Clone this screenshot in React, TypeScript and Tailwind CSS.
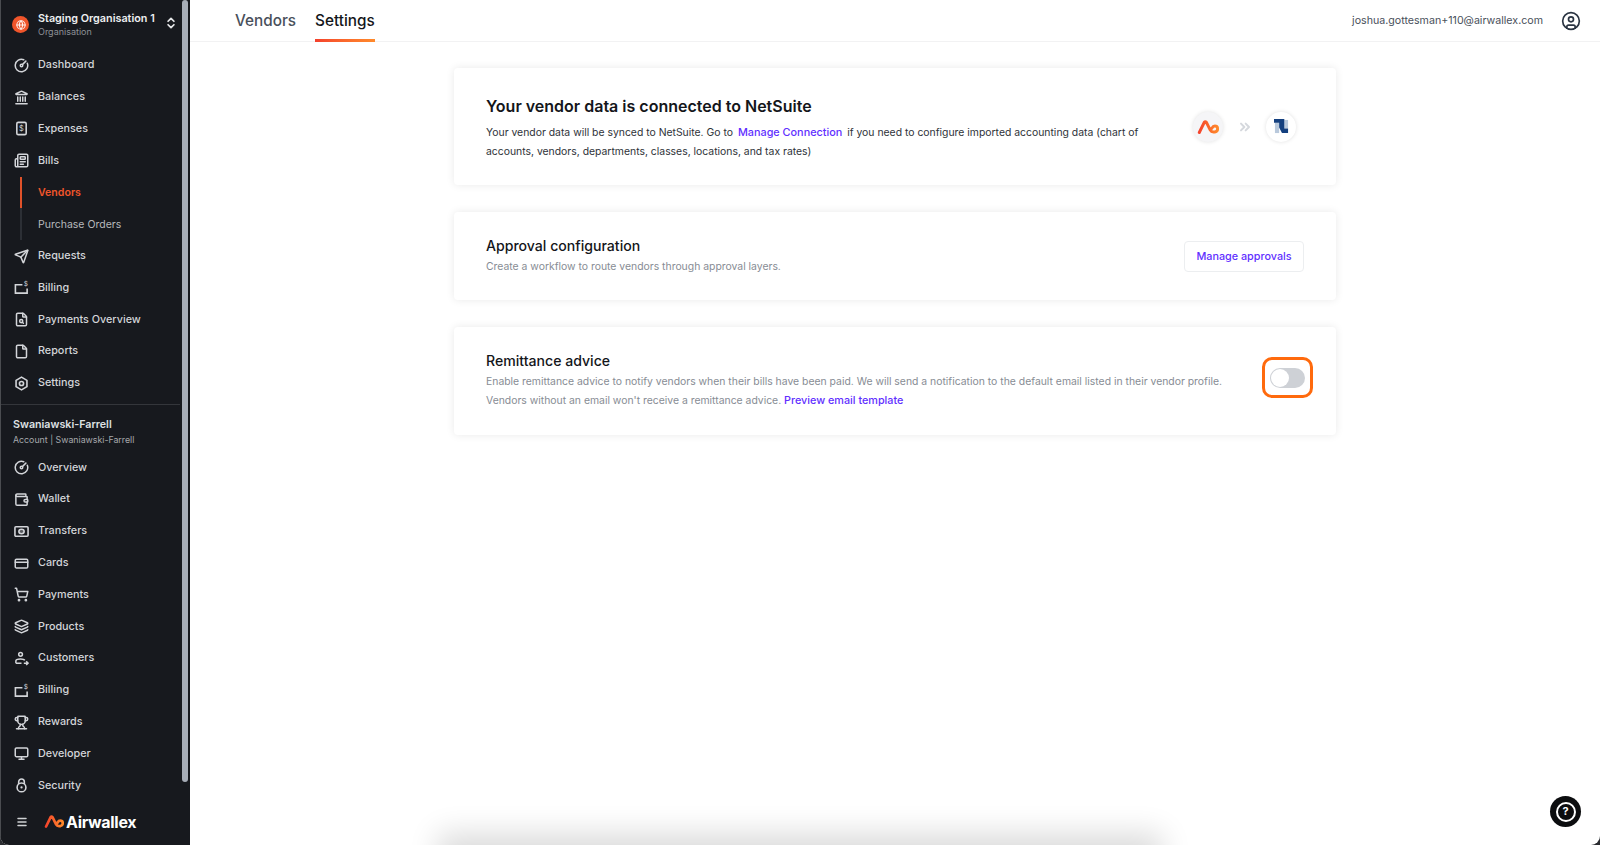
import React from 'react';
import {
  CircleGauge, Landmark, Newspaper, Send, FileSearch, File, Wallet,
  CreditCard, ShoppingCart, Layers, Trophy, Monitor, ChevronsUpDown, Menu,
  CircleUser, Globe, ChevronsRight,
} from 'lucide-react';

type IconProps = { className?: string; strokeWidth?: number };

const BillingIcon = ({ className }: IconProps) => (
  <svg viewBox="0 0 16 16" fill="none" stroke="currentColor" strokeWidth="1.7" className={className}>
    <path d="M9 5H1.500v9h12.500V9" />
    <text x="10.500" y="6" fontSize="7" fill="currentColor" stroke="none" fontFamily="Inter, sans-serif">$</text>
  </svg>
);

const CustomersIcon = ({ className }: IconProps) => (
  <svg viewBox="0 0 16 16" fill="none" stroke="currentColor" strokeWidth="1.6" className={className}>
    <circle cx="7" cy="3.500" r="2" />
    <path d="M2 13V10.500C2 9 3.500 8.500 7 8.500s4 .5 4.500 1.500M2 13h6M10.500 13h4.500M13 11l2 2-2 2" />
  </svg>
);

const ExpensesIcon = ({ className }: IconProps) => (
  <svg viewBox="0 0 16 16" fill="none" stroke="currentColor" strokeWidth="1.7" className={className}>
    <rect x="3" y="1.500" width="10" height="13" rx="1.500" />
    <text x="8" y="10.500" fontSize="8" textAnchor="middle" fill="currentColor" stroke="none" fontFamily="Inter, sans-serif">$</text>
  </svg>
);

const SettingsIcon = ({ className }: IconProps) => (
  <svg viewBox="0 0 16 16" fill="none" stroke="currentColor" strokeWidth="1.7" strokeLinejoin="round" className={className}>
    <path d="M8 1.200l5.800 3.400v6.800L8 14.800l-5.800-3.400V4.600z" />
    <circle cx="8" cy="8" r="2.200" />
  </svg>
);

const TransfersIcon = ({ className }: IconProps) => (
  <svg viewBox="0 0 16 16" fill="none" stroke="currentColor" strokeWidth="1.7" className={className}>
    <rect x="1" y="3" width="14" height="10" rx="1" />
    <ellipse cx="8" cy="8" rx="2.800" ry="2.400" fill="currentColor" fillOpacity="0.35" />
  </svg>
);

const SecurityIcon = ({ className }: IconProps) => (
  <svg viewBox="0 0 16 16" fill="none" stroke="currentColor" strokeWidth="1.7" className={className}>
    <circle cx="8" cy="10" r="4.700" />
    <path d="M5 6.500V4a3 3 0 0 1 6 0v2.500" />
    <circle cx="8" cy="10" r="1.200" fill="currentColor" stroke="none" />
  </svg>
);

const Row = ({ icon: Icon, label }: { icon: React.ComponentType<IconProps>; label: string }) => (
  <div className="flex h-[31.8px] items-center pl-[13px] text-[#d3d5d9]">
    <Icon className="h-[15px] w-[15px] shrink-0" strokeWidth={2.4} />
    <span className="ml-[9px] text-[10.8px] font-medium">{label}</span>
  </div>
);

const orgItems = [
  { icon: CircleGauge, label: 'Dashboard' },
  { icon: Landmark, label: 'Balances' },
  { icon: ExpensesIcon, label: 'Expenses' },
  { icon: Newspaper, label: 'Bills' },
];

const orgItemsAfter = [
  { icon: Send, label: 'Requests' },
  { icon: BillingIcon, label: 'Billing' },
  { icon: FileSearch, label: 'Payments Overview' },
  { icon: File, label: 'Reports' },
  { icon: SettingsIcon, label: 'Settings' },
];

const accountItems = [
  { icon: CircleGauge, label: 'Overview' },
  { icon: Wallet, label: 'Wallet' },
  { icon: TransfersIcon, label: 'Transfers' },
  { icon: CreditCard, label: 'Cards' },
  { icon: ShoppingCart, label: 'Payments' },
  { icon: Layers, label: 'Products' },
  { icon: CustomersIcon, label: 'Customers' },
  { icon: BillingIcon, label: 'Billing' },
  { icon: Trophy, label: 'Rewards' },
  { icon: Monitor, label: 'Developer' },
  { icon: SecurityIcon, label: 'Security' },
];

const AirwallexMark = ({ className, id }: { className?: string; id: string }) => (
  <svg viewBox="0 0 24 16" fill="none" className={className}>
    <defs>
      <linearGradient id={id} gradientUnits="userSpaceOnUse" x1="1" y1="8" x2="23" y2="8">
        <stop offset="0" stopColor="#f4402c" />
        <stop offset="1" stopColor="#ff8a2b" />
      </linearGradient>
    </defs>
    <path
      d="M2.500 14L8 2.800Q9 1.500 10.200 2.800L14.500 11.500Q15.500 13.500 18 13.500L19.500 13.500Q22.500 13 22.500 10Q22.500 7 19.500 7Q17.500 7 16.500 9L14.500 11.500"
      stroke={`url(#${id})`}
      strokeWidth="3.2"
      strokeLinecap="round"
      strokeLinejoin="round"
    />
  </svg>
);

const NetSuiteMark = () => (
  <svg viewBox="0 0 16 16" className="h-[15px] w-[15px]">
    <rect x="1" y="4" width="4.500" height="11" fill="#b9c9dc" />
    <rect x="11" y="1" width="4" height="9" fill="#b9c9dc" />
    <polygon points="0,0 11,0 11,10 15,10 15,15 8.500,15 5.500,9 5.500,4 0,4" fill="#14407f" />
  </svg>
);

export default function App() {
  return (
    <div className="h-[845px] w-[1600px] overflow-hidden bg-[#2a2c30] font-['Inter',sans-serif]">
      <div className="relative flex h-full overflow-hidden rounded-b-[9px] bg-white">
        {/* sidebar */}
        <aside className="relative flex h-full w-[190px] shrink-0 flex-col border-l border-[#4a4c50] bg-[#17191e]">
          <div className="flex h-[49.5px] items-center pl-[11px]">
            <span className="flex h-[17px] w-[17px] items-center justify-center rounded-full bg-[#f0552b]">
              <Globe className="h-[10px] w-[10px] text-white/90" strokeWidth={2.5} />
            </span>
            <div className="ml-[9px] flex flex-col pb-[2px]">
              <span className="whitespace-nowrap text-[10.8px] leading-[15px] font-semibold text-[#eceef0]">Staging Organisation 1</span>
              <span className="text-[9px] leading-[11px] text-[#8d9096]">Organisation</span>
            </div>
            <ChevronsUpDown className="absolute left-[163px] top-[16px] h-[14px] w-[14px] text-[#e6e7e9]" strokeWidth={3} />
          </div>

          <nav className="flex flex-col">
            {orgItems.map((item) => <Row key={item.label} {...item} />)}
            <div className="ml-[19px] flex flex-col border-l-2 border-[#2c2f35]">
              <div className="-ml-[2px] flex h-[31.8px] items-center border-l-2 border-[#e0522a] pl-[16px] text-[10.6px] font-semibold text-[#f0552b]">
                Vendors
              </div>
              <div className="flex h-[31.8px] items-center pl-[16px] text-[10.5px] text-[#b6b8bc]">
                Purchase Orders
              </div>
            </div>
            {orgItemsAfter.map((item) => <Row key={item.label} {...item} />)}
          </nav>

          <div className="mt-[4.5px] mr-[10px] border-t border-[#34363b]" />

          <div className="flex flex-col pl-[12px] pt-[12px] pb-[5px]">
            <span className="text-[10.7px] leading-[16px] font-semibold text-[#dfe1e4]">Swaniawski-Farrell</span>
            <span className="text-[8.8px] leading-[14px] text-[#a6a8ac]">Account | Swaniawski-Farrell</span>
          </div>

          <nav className="flex flex-col">
            {accountItems.map((item) => <Row key={item.label} {...item} />)}
          </nav>

          <div className="mt-[10px] flex items-center pl-[15px]">
            <Menu className="h-[12px] w-[12px] text-[#cfd1d4]" strokeWidth={3} />
            <AirwallexMark id="side-mark" className="ml-[16px] h-[15px] w-[20px]" />
            <span className="ml-[2px] text-[16px] leading-[20px] font-bold tracking-[-0.3px] text-white">Airwallex</span>
          </div>

          {/* scrollbar */}
          <div className="absolute left-[181px] top-0 h-[782px] w-[6px] rounded-full bg-[#a7adb7]" />
        </aside>

        {/* main */}
        <main className="flex min-w-0 flex-1 flex-col">
          <header className="flex h-[42px] items-stretch border-b border-[#f2f2f3] pl-[45px] pr-[19px]">
            <div className="flex items-center pt-[1px] text-[15.3px] font-medium text-[#49505b]">Vendors</div>
            <div className="relative ml-[19px] flex items-center pt-[1px] text-[15.3px] font-medium text-[#14161a]">
              Settings
              <span className="absolute bottom-[-1px] left-0 right-0 h-[3px] bg-gradient-to-r from-[#f4402c] to-[#ff8a2b]" />
            </div>
            <div className="ml-auto flex items-center text-[#49505b]">
              <span className="text-[10.65px]">joshua.gottesman+110@airwallex.com</span>
              <CircleUser className="ml-[18px] h-[20px] w-[20px] text-[#2a3442]" />
            </div>
          </header>

          <div className="mx-auto flex w-[882px] flex-col gap-[27px] pt-[26px]">
            <section className="flex h-[117px] items-center rounded-[4px] bg-white pl-[32px] pr-[40px] shadow-[0_0_8px_rgba(0,0,0,0.09)]">
              <div className="w-[656px]">
                <h2 className="text-[16px] leading-[26px] font-semibold text-[#14161a]">Your vendor data is connected to NetSuite</h2>
                <p className="mt-[4px] text-[10.4px] leading-[19px] text-[#2e3238]">
                  Your vendor data will be synced to NetSuite. Go to <span className="mx-[2px] text-[10.85px] font-medium text-[#612fff]">Manage Connection</span> if you need to configure imported accounting data (chart of accounts, vendors, departments, classes, locations, and tax rates)
                </p>
              </div>
              <div className="ml-auto flex items-center">
                <div className="flex h-[30px] w-[30px] items-center justify-center rounded-full bg-[#f5f5f7] shadow-[0_0_4px_rgba(0,0,0,0.12)]">
                  <AirwallexMark id="card-mark" className="h-[16px] w-[22px]" />
                </div>
                <ChevronsRight className="mx-[13.5px] h-[16px] w-[16px] text-[#d5d8dd]" strokeWidth={3} />
                <div className="flex h-[30px] w-[30px] items-center justify-center rounded-full bg-white shadow-[0_0_4px_rgba(0,0,0,0.12)]">
                  <NetSuiteMark />
                </div>
              </div>
            </section>

            <section className="flex h-[88px] items-center rounded-[4px] bg-white pl-[32px] pr-[32px] shadow-[0_0_8px_rgba(0,0,0,0.09)]">
              <div className="pb-[1px]">
                <h3 className="text-[14.1px] leading-[20px] font-medium text-[#14161a]">Approval configuration</h3>
                <p className="mt-[1px] text-[10.4px] leading-[19px] text-[#878c94]">Create a workflow to route vendors through approval layers.</p>
              </div>
              <button className="ml-auto flex h-[31px] w-[120px] items-center justify-center rounded-[4px] border border-[#eceef0] pt-[2px] text-[10.8px] font-medium text-[#612fff]">
                Manage approvals
              </button>
            </section>

            <section className="flex h-[108px] items-center rounded-[4px] bg-white pl-[32px] pr-[23px] shadow-[0_0_8px_rgba(0,0,0,0.09)]">
              <div className="w-[760px] pb-[1px]">
                <h3 className="text-[14.1px] leading-[20px] font-medium text-[#14161a]">Remittance advice</h3>
                <p className="mt-[2px] text-[10.4px] leading-[18.5px] text-[#878c94]">
                  Enable remittance advice to notify vendors when their bills have been paid. We will send a notification to the default email listed in their vendor profile. Vendors without an email won't receive a remittance advice. <span className="text-[10.8px] font-medium text-[#612fff]">Preview email template</span>
                </p>
              </div>
              <div className="mb-[7px] ml-auto flex h-[41px] w-[51px] items-center justify-center rounded-[10px] border-[3px] border-[#ff6a0d]">
                <div className="flex h-[20px] w-[35px] items-center rounded-full bg-[#ced1d6] pl-[1px]">
                  <span className="h-[18px] w-[18px] rounded-full bg-white" />
                </div>
              </div>
            </section>
          </div>
        </main>

        {/* shadow along the bottom edge */}
        <div className="absolute bottom-[-30px] left-[450px] h-[30px] w-[700px] shadow-[0_0_30px_12px_rgba(0,0,0,0.14)]" />

        {/* help button */}
        <div className="absolute left-[1550px] top-[796px] flex h-[31px] w-[31px] items-center justify-center rounded-full bg-[#0c0d0f]">
          <div className="flex h-[20px] w-[20px] items-center justify-center rounded-full border-2 border-white text-[11px] font-bold text-white">?</div>
        </div>
      </div>
    </div>
  );
}
